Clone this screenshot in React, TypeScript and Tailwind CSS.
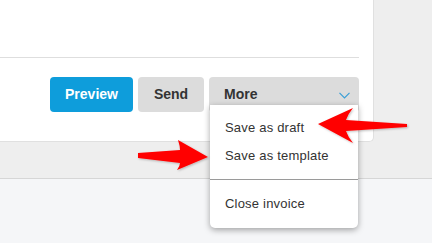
import React from "react";

export default function App() {
  const font = { fontFamily: '"Liberation Sans", Arial, sans-serif' };
  return (
    <div className="relative w-[432px] h-[243px] overflow-hidden bg-[#f5f6f8]" style={font}>
      <div className="h-[179px] bg-[#eeeeee] border-b border-[#d6d6d6]">
        <div className="w-[374px] h-[142px] bg-white rounded-br-[5px] border-r border-b border-[#e0e0e0]">
          <div className="h-[58px] mr-[14px] border-b border-[#dedede]" />
          <div className="mt-[19px] pr-[14px] flex justify-end gap-[5px]">
            <button className="w-[83px] h-[35px] rounded-[4px] bg-[#0e9ddb] text-white text-[14px] font-bold">
              Preview
            </button>
            <button className="w-[66px] h-[35px] rounded-[4px] bg-[#dcdcdc] text-[#333333] text-[14px] font-bold">
              Send
            </button>
            <div className="relative w-[150px]">
              <button className="w-full h-[35px] pl-[15px] pr-[9px] rounded-[4px] bg-[#dcdcdc] text-[#333333] text-[14px] font-bold flex items-center justify-between">
                <span>More</span>
                <svg width="11" height="7" viewBox="0 0 11 7" className="mt-[2px]">
                  <path d="M0.5 0.8 L5.5 5.8 L10.5 0.8" fill="none" stroke="#3a9fd6" strokeWidth="1.2" />
                </svg>
              </button>
              <div className="absolute z-10 left-[1px] top-[28px] w-[148px] bg-white rounded-b-[5px] shadow-[0_2px_6px_rgba(0,0,0,0.35)] pt-[9px] pb-[10px] text-[13px] text-[#333333] tracking-[0.2px]">
                <div className="h-[28px] flex items-center pl-[15px]">Save as draft</div>
                <div className="h-[28px] flex items-center pl-[15px]">Save as template</div>
                <div className="mt-[9px] mb-[10px] border-t border-[#9a9a9a]" />
                <div className="h-[28px] flex items-center pl-[15px]">Close invoice</div>
              </div>
            </div>
          </div>
        </div>
      </div>
      <svg className="absolute left-0 top-0 z-20 pointer-events-none" width="432" height="243" viewBox="0 0 432 243">
        <defs>
          <filter id="sh" x="-10%" y="-20%" width="120%" height="140%">
            <feDropShadow dx="1" dy="1" stdDeviation="1" floodColor="#000" floodOpacity="0.25" />
          </filter>
        </defs>
        <path
          d="M318 124 L353 108 Q348 114 346 120 L407 124 L407 127 L346 131 Q348 137 353 143 Z"
          fill="#ff0000"
          filter="url(#sh)"
        />
        <path
          d="M208 157 L178 140 Q180 146 180 150 L138 153 L138 158 L180 163 Q180 166 177 170 Z"
          fill="#ff0000"
          filter="url(#sh)"
        />
      </svg>
    </div>
  );
}
